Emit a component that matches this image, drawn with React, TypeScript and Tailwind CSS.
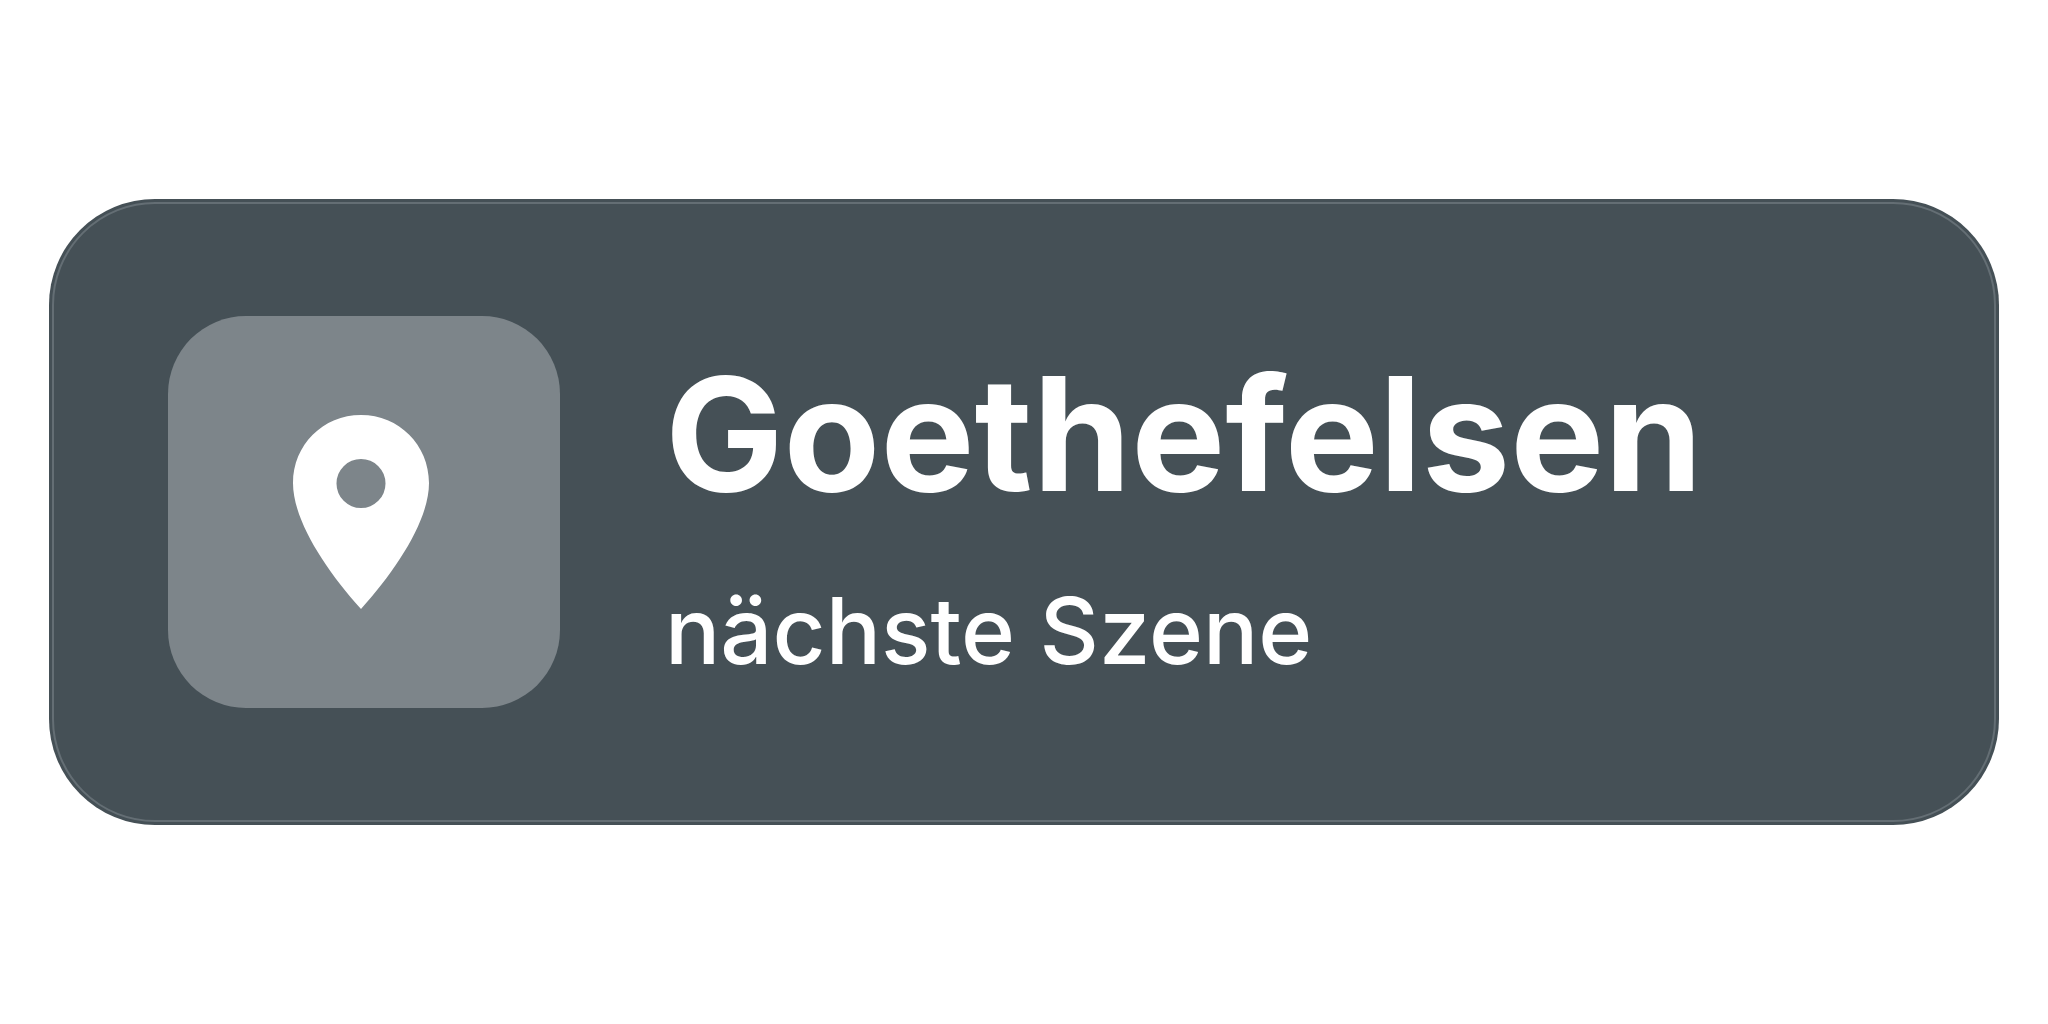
export default function App() {
  return (
    <main className="flex min-h-screen items-center bg-white px-[49px] font-['Inter',sans-serif] text-white">
      <a href="#" className="flex w-full items-center rounded-[106px] bg-[#455056] p-[3px]">
        <span className="flex w-full items-center gap-[105px] rounded-[103px] border-2 border-[#646e74] py-28 pr-12 pl-[114px]">
          <span className="flex size-[392px] shrink-0 items-center justify-center rounded-[78px] bg-[#7d858a] pr-1.5">
            <svg viewBox="0 0 138 196" className="h-[196px] w-[138px]" fill="currentColor" aria-hidden="true">
              <path fillRule="evenodd" d="M69 1C31 1 1 31 1 69C1 106 33 155 69 195C105 155 137 106 137 69C137 31 107 1 69 1ZM69 45A24.500 24.500 0 1 1 69 94A24.500 24.500 0 1 1 69 45Z" />
            </svg>
          </span>
          <span className="flex flex-col gap-18 pt-2">
            <strong className="text-[158px] leading-none font-bold">Goethefelsen</strong>
            <span className="text-[92px] leading-none font-medium">nächste Szene</span>
          </span>
        </span>
      </a>
    </main>
  );
}
